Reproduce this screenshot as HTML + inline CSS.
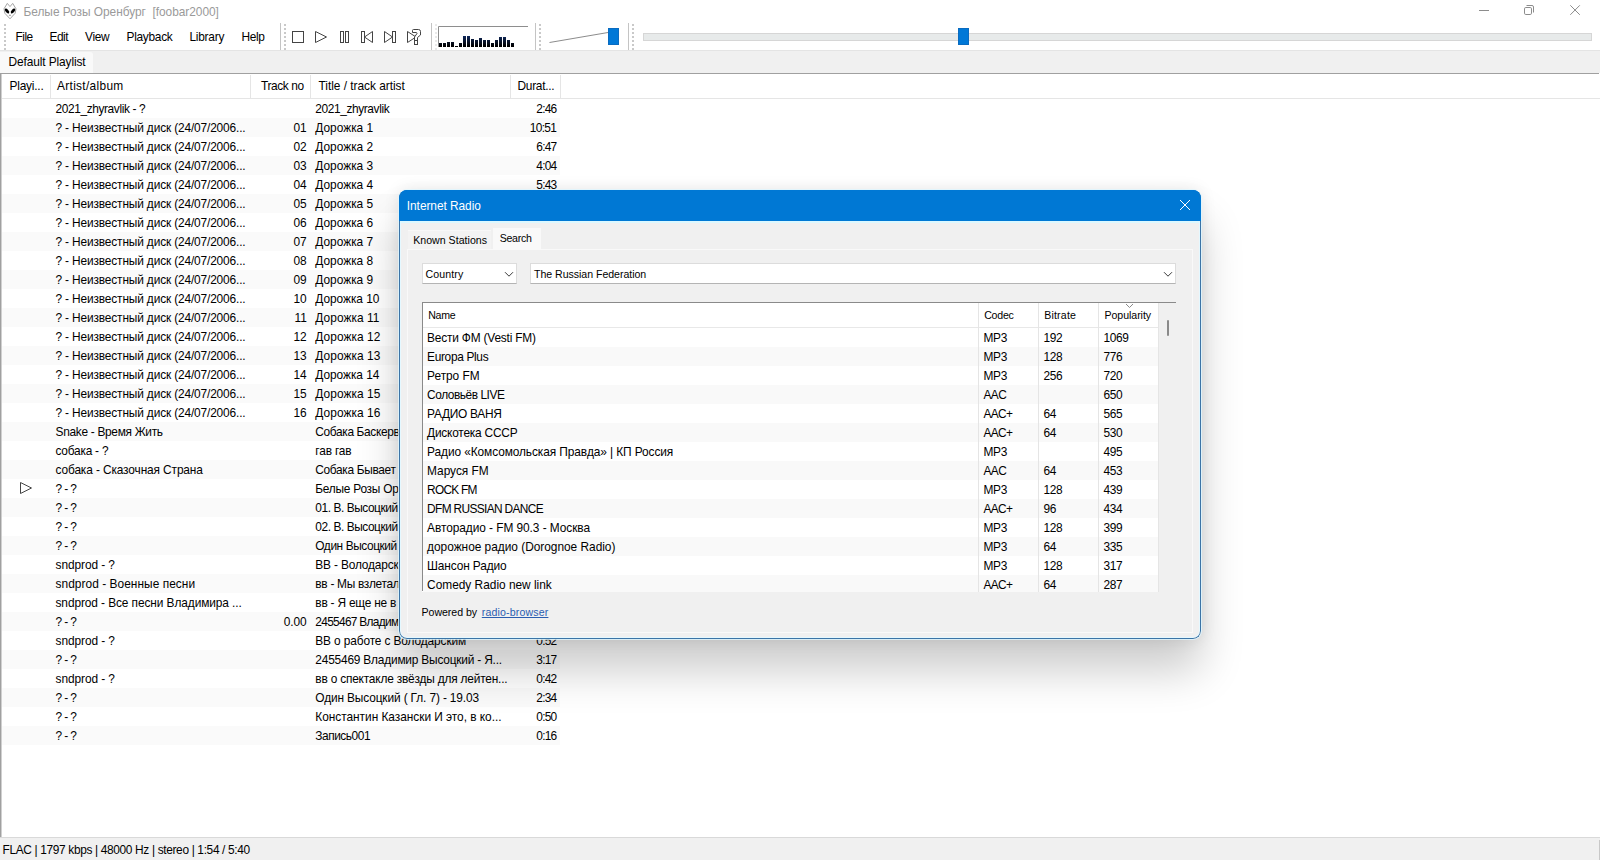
<!DOCTYPE html>
<html lang="ru"><head><meta charset="utf-8"><title>Белые Розы Оренбург [foobar2000]</title>
<style>
html,body{margin:0;padding:0}
body{width:1600px;height:860px;overflow:hidden;background:#fff;position:relative;font-family:'Liberation Sans',sans-serif;font-size:12px;color:#000}
.b{position:absolute;display:block}
.t{position:absolute;white-space:pre;display:block}
#main{position:absolute;left:0;top:0;width:1600px;height:860px;overflow:hidden}
#dlg{position:absolute;left:399px;top:190px;width:802px;height:449px;border-radius:8px;background:#f0f0f0;
 box-shadow:0 0 0 1px rgba(222,246,255,.8),0 32px 44px rgba(0,0,0,.20),0 0 16px rgba(0,0,0,.10)}
#dlgin{position:absolute;left:-399px;top:-190px;width:1600px;height:860px;clip-path:inset(190px 399px 221px 399px round 8px)}
#dtitle{position:absolute;left:399px;top:190px;width:802px;height:31px;background:#0078d4}
#dborder{position:absolute;left:399px;top:190px;width:802px;height:449px;box-sizing:border-box;border:1px solid #3c74a6;border-top-color:#0078d4;border-radius:8px}
#dhl{position:absolute;left:400px;top:221px;width:800px;height:417px;box-sizing:border-box;border:1px solid #e4f8ff;border-top:2px solid #dcf8ff;border-radius:0 0 7px 7px}
#dtb{position:absolute;left:399px;top:190px;width:802px;height:31px;box-sizing:border-box;border:1px solid #0078d4;border-bottom:0;border-radius:8px 8px 0 0}
</style></head>
<body>
<div id="main">
<div class=b style="left:0px;top:50px;width:1600px;height:23px;background:#f0f0f0;"></div>
<div class=b style="left:0px;top:50px;width:1600px;height:1px;background:#e4e4e4;"></div>
<div class=b style="left:0px;top:52px;width:93px;height:21px;background:#f9f9f9;border-radius:0 3px 0 0"></div>
<div class=b style="left:0px;top:73px;width:1599px;height:1px;background:#a0a0a0;"></div>
<div class=b style="left:280px;top:23px;width:1px;height:27px;background:#c4c4c4;"></div>
<div class=b style="left:431px;top:23px;width:1px;height:27px;background:#c4c4c4;"></div>
<div class=b style="left:535px;top:23px;width:1px;height:27px;background:#c4c4c4;"></div>
<div class=b style="left:628px;top:23px;width:1px;height:27px;background:#c4c4c4;"></div>
<div class=b style="left:4px;top:24px;width:2px;height:26px;background:repeating-linear-gradient(to bottom,#c9c9c9 0 2px,#fff 2px 4px)"></div>
<div class=b style="left:284px;top:24px;width:2px;height:26px;background:repeating-linear-gradient(to bottom,#c9c9c9 0 2px,#fff 2px 4px)"></div>
<div class=b style="left:435px;top:24px;width:2px;height:26px;background:repeating-linear-gradient(to bottom,#e9e9e9 0 2px,#fff 2px 4px)"></div>
<div class=b style="left:539px;top:24px;width:2px;height:26px;background:repeating-linear-gradient(to bottom,#c9c9c9 0 2px,#fff 2px 4px)"></div>
<div class=b style="left:632px;top:24px;width:2px;height:26px;background:repeating-linear-gradient(to bottom,#c9c9c9 0 2px,#fff 2px 4px)"></div>
<div class=b style="left:0px;top:98px;width:1600px;height:1px;background:#e5e5e5;"></div>
<div class=b style="left:50px;top:75px;width:1px;height:23px;background:#e5e5e5;"></div>
<div class=b style="left:250px;top:75px;width:1px;height:23px;background:#e5e5e5;"></div>
<div class=b style="left:310px;top:75px;width:1px;height:23px;background:#e5e5e5;"></div>
<div class=b style="left:510px;top:75px;width:1px;height:23px;background:#e5e5e5;"></div>
<div class=b style="left:560px;top:75px;width:1px;height:23px;background:#e5e5e5;"></div>
<div class=b style="left:0px;top:74px;width:1px;height:763px;background:#a0a0a0;"></div>
<div class=b style="left:1px;top:74px;width:1px;height:763px;background:#d0d0d0;"></div>
<div class=b style="left:2px;top:118px;width:558px;height:19px;background:#fafafa;"></div>
<div class=b style="left:2px;top:156px;width:558px;height:19px;background:#fafafa;"></div>
<div class=b style="left:2px;top:194px;width:558px;height:19px;background:#fafafa;"></div>
<div class=b style="left:2px;top:232px;width:558px;height:19px;background:#fafafa;"></div>
<div class=b style="left:2px;top:270px;width:558px;height:19px;background:#fafafa;"></div>
<div class=b style="left:2px;top:308px;width:558px;height:19px;background:#fafafa;"></div>
<div class=b style="left:2px;top:346px;width:558px;height:19px;background:#fafafa;"></div>
<div class=b style="left:2px;top:384px;width:558px;height:19px;background:#fafafa;"></div>
<div class=b style="left:2px;top:422px;width:558px;height:19px;background:#fafafa;"></div>
<div class=b style="left:2px;top:460px;width:558px;height:19px;background:#fafafa;"></div>
<div class=b style="left:2px;top:498px;width:558px;height:19px;background:#fafafa;"></div>
<div class=b style="left:2px;top:536px;width:558px;height:19px;background:#fafafa;"></div>
<div class=b style="left:2px;top:574px;width:558px;height:19px;background:#fafafa;"></div>
<div class=b style="left:2px;top:612px;width:558px;height:19px;background:#fafafa;"></div>
<div class=b style="left:2px;top:650px;width:558px;height:19px;background:#fafafa;"></div>
<div class=b style="left:2px;top:688px;width:558px;height:19px;background:#fafafa;"></div>
<div class=b style="left:2px;top:726px;width:558px;height:19px;background:#fafafa;"></div>
<svg class=b style='left:19px;top:481px' width=14 height=14><path d='M1.5 1.5 L12.5 7 L1.5 12.5 Z' fill='none' stroke='#444' stroke-width='1'/></svg>
<div class=b style="left:0px;top:837px;width:1600px;height:1px;background:#d9d9d9;"></div>
<div class=b style="left:0px;top:838px;width:1600px;height:22px;background:#f0f0f0;"></div>
<div class=b style="left:1599px;top:840px;width:1px;height:20px;background:#c8c8c8;"></div>
<svg class=b style="left:0;top:0" width="1600" height="50" viewBox="0 0 1600 50">
<!-- app icon -->
<path d="M7.3 3.4 L10 6.6 L12.7 3.4 L16 8.8 L15.2 13.2 L10 18.8 L4.8 13.2 L4 8.8 Z" fill="#fff" stroke="#9a9a9a" stroke-width=".9" stroke-linejoin="round"/>
<ellipse cx="7" cy="11" rx="1.5" ry="2.9" transform="rotate(-42 7 11)" fill="#000"/>
<ellipse cx="13" cy="11" rx="1.5" ry="2.9" transform="rotate(42 13 11)" fill="#000"/>
<path d="M10 14.3 L8.8 15.8 L11.2 15.8 Z" fill="#8a8a8a"/>
<!-- window controls -->
<g fill="none" stroke="#8c8c8c" stroke-width="1">
<path d="M1479 10.5 H1489"/>
<rect x="1524.5" y="7.5" width="7" height="7" rx="1.3"/>
<path d="M1526.5 5.5 H1532 Q1533.5 5.5 1533.5 7 V12.5"/>
<path d="M1570.3 5.3 L1579.8 14.8 M1579.8 5.3 L1570.3 14.8"/>
</g>
<!-- playback icons -->
<g fill="none" stroke="#444" stroke-width="1">
<rect x="292.5" y="31.5" width="11" height="11"/>
<path d="M315.5 31.5 L326.5 37 L315.5 42.5 Z"/>
<rect x="340.5" y="31.5" width="3" height="11"/><rect x="345.5" y="31.5" width="3" height="11"/>
<rect x="361.5" y="31.5" width="3" height="11"/><path d="M364.5 37 L372.5 31.5 V42.5 Z"/>
<path d="M384.5 31.5 L392.5 37 L384.5 42.5 Z"/><rect x="392.5" y="31.5" width="3" height="11"/>
<path d="M407.5 31.5 L416 37 L407.5 42.5 Z"/>
<path d="M412.5 32.5 V30.5 Q412.5 29.5 413.5 29.5 H418.5 Q420.5 29.5 420.5 31.5 V35 L417.5 37.5 V40.5 H414.5 V37 L417 33.5 Q417 32.5 416 32.5 Z" fill="#fff"/>
<rect x="414.5" y="40.5" width="3" height="4" fill="#fff"/>
</g>
<!-- spectrum --><defs><linearGradient id='sg' gradientUnits='userSpaceOnUse' x1='0' y1='34' x2='0' y2='46'><stop offset='0' stop-color='#12306e'/><stop offset='1' stop-color='#000'/></linearGradient></defs>
<path d="M438.5 47 V26.5 H528" fill="none" stroke="#8e8e8e" stroke-width="1"/>
<rect x='439' y='43' width='3' height='4' fill='url(#sg)'/><rect x='443' y='43' width='3' height='4' fill='url(#sg)'/><rect x='447' y='42' width='3' height='5' fill='url(#sg)'/><rect x='451' y='42' width='3' height='5' fill='url(#sg)'/><rect x='455' y='46' width='3' height='1' fill='url(#sg)'/><rect x='459' y='43' width='3' height='4' fill='url(#sg)'/><rect x='463' y='36' width='3' height='11' fill='url(#sg)'/><rect x='467' y='36' width='3' height='11' fill='url(#sg)'/><rect x='471' y='39' width='3' height='8' fill='url(#sg)'/><rect x='475' y='40' width='3' height='7' fill='url(#sg)'/><rect x='479' y='38' width='3' height='9' fill='url(#sg)'/><rect x='483' y='40' width='3' height='7' fill='url(#sg)'/><rect x='487' y='40' width='3' height='7' fill='url(#sg)'/><rect x='491' y='43' width='3' height='4' fill='url(#sg)'/><rect x='495' y='40' width='3' height='7' fill='url(#sg)'/><rect x='499' y='37' width='3' height='10' fill='url(#sg)'/><rect x='503' y='37' width='3' height='10' fill='url(#sg)'/><rect x='507' y='40' width='3' height='7' fill='url(#sg)'/><rect x='511' y='43' width='3' height='4' fill='url(#sg)'/>
<!-- volume -->
<path d="M549.5 42.5 L608 32.5" stroke="#8c8c8c" stroke-width="1" fill="none"/>
<rect x="608.5" y="28.5" width="10" height="16" fill="#0078d7" stroke="#0a6bc0" stroke-width="1"/>
<!-- seek -->
<rect x="643.5" y="33.5" width="948" height="7" fill="#e7eaea" stroke="#d6d6d6" stroke-width="1"/>
<rect x="958.5" y="28.5" width="10" height="16" fill="#0078d7" stroke="#0a6bc0" stroke-width="1"/>
</svg>
<span class=t style="left:23.50px;top:7.00px;font-size:11.9px;line-height:11.9px;letter-spacing:-0.031px;color:#9a9a9a;">Белые Розы Оренбург  [foobar2000]</span>
<span class=t style="left:15.50px;top:32.00px;font-size:11.9px;line-height:11.9px;letter-spacing:-0.500px;color:#000;">File</span>
<span class=t style="left:49.50px;top:32.00px;font-size:11.9px;line-height:11.9px;letter-spacing:-0.500px;color:#000;">Edit</span>
<span class=t style="left:85.00px;top:32.00px;font-size:11.9px;line-height:11.9px;letter-spacing:-0.333px;color:#000;">View</span>
<span class=t style="left:126.50px;top:32.00px;font-size:11.9px;line-height:11.9px;letter-spacing:-0.286px;color:#000;">Playback</span>
<span class=t style="left:189.50px;top:32.00px;font-size:11.9px;line-height:11.9px;letter-spacing:-0.250px;color:#000;">Library</span>
<span class=t style="left:241.50px;top:32.00px;font-size:11.9px;line-height:11.9px;letter-spacing:-0.333px;color:#000;">Help</span>
<span class=t style="left:8.50px;top:57.00px;font-size:11.9px;line-height:11.9px;letter-spacing:-0.100px;color:#000;">Default Playlist</span>
<span class=t style="left:9.50px;top:80.50px;font-size:11.9px;line-height:11.9px;letter-spacing:-0.214px;color:#000;">Playi...</span>
<span class=t style="left:57.00px;top:80.50px;font-size:11.9px;line-height:11.9px;letter-spacing:0.318px;color:#000;">Artist/album</span>
<span class=t style="left:261.00px;top:80.50px;font-size:11.9px;line-height:11.9px;letter-spacing:-0.371px;color:#000;">Track no</span>
<span class=t style="left:318.50px;top:80.50px;font-size:11.9px;line-height:11.9px;letter-spacing:-0.026px;color:#000;">Title / track artist</span>
<span class=t style="left:517.50px;top:80.50px;font-size:11.9px;line-height:11.9px;letter-spacing:-0.286px;color:#000;">Durat...</span>
<span class=t style="left:55.50px;top:103.60px;font-size:11.9px;line-height:11.9px;letter-spacing:-0.382px;color:#000;">2021_zhyravlik - ?</span>
<span class=t style="left:315.30px;top:103.60px;font-size:11.9px;line-height:11.9px;letter-spacing:-0.385px;color:#000;">2021_zhyravlik</span>
<span class=t style="left:536.29px;top:103.60px;font-size:11.9px;line-height:11.9px;letter-spacing:-0.763px;color:#000;">2:46</span>
<span class=t style="left:55.50px;top:122.60px;font-size:11.9px;line-height:11.9px;letter-spacing:-0.147px;color:#000;">? - Неизвестный диск (24/07/2006...</span>
<span class=t style="left:293.62px;top:122.60px;font-size:11.9px;line-height:11.9px;letter-spacing:-0.120px;color:#000;">01</span>
<span class=t style="left:315.30px;top:122.60px;font-size:11.9px;line-height:11.9px;letter-spacing:0.000px;color:#000;">Дорожка 1</span>
<span class=t style="left:529.82px;top:122.60px;font-size:11.9px;line-height:11.9px;letter-spacing:-0.705px;color:#000;">10:51</span>
<span class=t style="left:55.50px;top:141.60px;font-size:11.9px;line-height:11.9px;letter-spacing:-0.147px;color:#000;">? - Неизвестный диск (24/07/2006...</span>
<span class=t style="left:293.62px;top:141.60px;font-size:11.9px;line-height:11.9px;letter-spacing:-0.120px;color:#000;">02</span>
<span class=t style="left:315.30px;top:141.60px;font-size:11.9px;line-height:11.9px;letter-spacing:0.000px;color:#000;">Дорожка 2</span>
<span class=t style="left:536.29px;top:141.60px;font-size:11.9px;line-height:11.9px;letter-spacing:-0.763px;color:#000;">6:47</span>
<span class=t style="left:55.50px;top:160.60px;font-size:11.9px;line-height:11.9px;letter-spacing:-0.147px;color:#000;">? - Неизвестный диск (24/07/2006...</span>
<span class=t style="left:293.62px;top:160.60px;font-size:11.9px;line-height:11.9px;letter-spacing:-0.120px;color:#000;">03</span>
<span class=t style="left:315.30px;top:160.60px;font-size:11.9px;line-height:11.9px;letter-spacing:0.000px;color:#000;">Дорожка 3</span>
<span class=t style="left:536.29px;top:160.60px;font-size:11.9px;line-height:11.9px;letter-spacing:-0.763px;color:#000;">4:04</span>
<span class=t style="left:55.50px;top:179.60px;font-size:11.9px;line-height:11.9px;letter-spacing:-0.147px;color:#000;">? - Неизвестный диск (24/07/2006...</span>
<span class=t style="left:293.62px;top:179.60px;font-size:11.9px;line-height:11.9px;letter-spacing:-0.120px;color:#000;">04</span>
<span class=t style="left:315.30px;top:179.60px;font-size:11.9px;line-height:11.9px;letter-spacing:0.000px;color:#000;">Дорожка 4</span>
<span class=t style="left:536.29px;top:179.60px;font-size:11.9px;line-height:11.9px;letter-spacing:-0.763px;color:#000;">5:43</span>
<span class=t style="left:55.50px;top:198.60px;font-size:11.9px;line-height:11.9px;letter-spacing:-0.147px;color:#000;">? - Неизвестный диск (24/07/2006...</span>
<span class=t style="left:293.62px;top:198.60px;font-size:11.9px;line-height:11.9px;letter-spacing:-0.120px;color:#000;">05</span>
<span class=t style="left:315.30px;top:198.60px;font-size:11.9px;line-height:11.9px;letter-spacing:0.000px;color:#000;">Дорожка 5</span>
<span class=t style="left:55.50px;top:217.60px;font-size:11.9px;line-height:11.9px;letter-spacing:-0.147px;color:#000;">? - Неизвестный диск (24/07/2006...</span>
<span class=t style="left:293.62px;top:217.60px;font-size:11.9px;line-height:11.9px;letter-spacing:-0.120px;color:#000;">06</span>
<span class=t style="left:315.30px;top:217.60px;font-size:11.9px;line-height:11.9px;letter-spacing:0.000px;color:#000;">Дорожка 6</span>
<span class=t style="left:55.50px;top:236.60px;font-size:11.9px;line-height:11.9px;letter-spacing:-0.147px;color:#000;">? - Неизвестный диск (24/07/2006...</span>
<span class=t style="left:293.62px;top:236.60px;font-size:11.9px;line-height:11.9px;letter-spacing:-0.120px;color:#000;">07</span>
<span class=t style="left:315.30px;top:236.60px;font-size:11.9px;line-height:11.9px;letter-spacing:0.000px;color:#000;">Дорожка 7</span>
<span class=t style="left:55.50px;top:255.60px;font-size:11.9px;line-height:11.9px;letter-spacing:-0.147px;color:#000;">? - Неизвестный диск (24/07/2006...</span>
<span class=t style="left:293.62px;top:255.60px;font-size:11.9px;line-height:11.9px;letter-spacing:-0.120px;color:#000;">08</span>
<span class=t style="left:315.30px;top:255.60px;font-size:11.9px;line-height:11.9px;letter-spacing:0.000px;color:#000;">Дорожка 8</span>
<span class=t style="left:55.50px;top:274.60px;font-size:11.9px;line-height:11.9px;letter-spacing:-0.147px;color:#000;">? - Неизвестный диск (24/07/2006...</span>
<span class=t style="left:293.62px;top:274.60px;font-size:11.9px;line-height:11.9px;letter-spacing:-0.120px;color:#000;">09</span>
<span class=t style="left:315.30px;top:274.60px;font-size:11.9px;line-height:11.9px;letter-spacing:0.000px;color:#000;">Дорожка 9</span>
<span class=t style="left:55.50px;top:293.60px;font-size:11.9px;line-height:11.9px;letter-spacing:-0.147px;color:#000;">? - Неизвестный диск (24/07/2006...</span>
<span class=t style="left:293.62px;top:293.60px;font-size:11.9px;line-height:11.9px;letter-spacing:-0.120px;color:#000;">10</span>
<span class=t style="left:315.30px;top:293.60px;font-size:11.9px;line-height:11.9px;letter-spacing:-0.044px;color:#000;">Дорожка 10</span>
<span class=t style="left:55.50px;top:312.60px;font-size:11.9px;line-height:11.9px;letter-spacing:-0.147px;color:#000;">? - Неизвестный диск (24/07/2006...</span>
<span class=t style="left:294.62px;top:312.60px;font-size:11.9px;line-height:11.9px;letter-spacing:-0.120px;color:#000;">11</span>
<span class=t style="left:315.30px;top:312.60px;font-size:11.9px;line-height:11.9px;letter-spacing:0.067px;color:#000;">Дорожка 11</span>
<span class=t style="left:55.50px;top:331.60px;font-size:11.9px;line-height:11.9px;letter-spacing:-0.147px;color:#000;">? - Неизвестный диск (24/07/2006...</span>
<span class=t style="left:293.62px;top:331.60px;font-size:11.9px;line-height:11.9px;letter-spacing:-0.120px;color:#000;">12</span>
<span class=t style="left:315.30px;top:331.60px;font-size:11.9px;line-height:11.9px;letter-spacing:0.067px;color:#000;">Дорожка 12</span>
<span class=t style="left:55.50px;top:350.60px;font-size:11.9px;line-height:11.9px;letter-spacing:-0.147px;color:#000;">? - Неизвестный диск (24/07/2006...</span>
<span class=t style="left:293.62px;top:350.60px;font-size:11.9px;line-height:11.9px;letter-spacing:-0.120px;color:#000;">13</span>
<span class=t style="left:315.30px;top:350.60px;font-size:11.9px;line-height:11.9px;letter-spacing:0.067px;color:#000;">Дорожка 13</span>
<span class=t style="left:55.50px;top:369.60px;font-size:11.9px;line-height:11.9px;letter-spacing:-0.147px;color:#000;">? - Неизвестный диск (24/07/2006...</span>
<span class=t style="left:293.62px;top:369.60px;font-size:11.9px;line-height:11.9px;letter-spacing:-0.120px;color:#000;">14</span>
<span class=t style="left:315.30px;top:369.60px;font-size:11.9px;line-height:11.9px;letter-spacing:-0.044px;color:#000;">Дорожка 14</span>
<span class=t style="left:55.50px;top:388.60px;font-size:11.9px;line-height:11.9px;letter-spacing:-0.147px;color:#000;">? - Неизвестный диск (24/07/2006...</span>
<span class=t style="left:293.62px;top:388.60px;font-size:11.9px;line-height:11.9px;letter-spacing:-0.120px;color:#000;">15</span>
<span class=t style="left:315.30px;top:388.60px;font-size:11.9px;line-height:11.9px;letter-spacing:0.067px;color:#000;">Дорожка 15</span>
<span class=t style="left:55.50px;top:407.60px;font-size:11.9px;line-height:11.9px;letter-spacing:-0.147px;color:#000;">? - Неизвестный диск (24/07/2006...</span>
<span class=t style="left:293.62px;top:407.60px;font-size:11.9px;line-height:11.9px;letter-spacing:-0.120px;color:#000;">16</span>
<span class=t style="left:315.30px;top:407.60px;font-size:11.9px;line-height:11.9px;letter-spacing:0.067px;color:#000;">Дорожка 16</span>
<span class=t style="left:55.50px;top:426.60px;font-size:11.9px;line-height:11.9px;letter-spacing:-0.300px;color:#000;">Snake - Время Жить</span>
<span class=t style="left:315.30px;top:426.60px;font-size:11.9px;line-height:11.9px;letter-spacing:-0.346px;color:#000;">Собака Баскервилей</span>
<span class=t style="left:55.50px;top:445.60px;font-size:11.9px;line-height:11.9px;letter-spacing:-0.233px;color:#000;">собака - ?</span>
<span class=t style="left:315.30px;top:445.60px;font-size:11.9px;line-height:11.9px;letter-spacing:-0.180px;color:#000;">гав гав</span>
<span class=t style="left:55.50px;top:464.60px;font-size:11.9px;line-height:11.9px;letter-spacing:-0.117px;color:#000;">собака - Сказочная Страна</span>
<span class=t style="left:315.30px;top:464.60px;font-size:11.9px;line-height:11.9px;letter-spacing:-0.333px;color:#000;">Собака Бывает Кусачей</span>
<span class=t style="left:55.50px;top:483.60px;font-size:11.9px;line-height:11.9px;letter-spacing:-0.600px;color:#000;">? - ?</span>
<span class=t style="left:315.30px;top:483.60px;font-size:11.9px;line-height:11.9px;letter-spacing:-0.250px;color:#000;">Белые Розы Оренбург</span>
<span class=t style="left:55.50px;top:502.60px;font-size:11.9px;line-height:11.9px;letter-spacing:-0.600px;color:#000;">? - ?</span>
<span class=t style="left:315.30px;top:502.60px;font-size:11.9px;line-height:11.9px;letter-spacing:-0.429px;color:#000;">01. В. Высоцкий - Песня</span>
<span class=t style="left:55.50px;top:521.60px;font-size:11.9px;line-height:11.9px;letter-spacing:-0.600px;color:#000;">? - ?</span>
<span class=t style="left:315.30px;top:521.60px;font-size:11.9px;line-height:11.9px;letter-spacing:-0.429px;color:#000;">02. В. Высоцкий - Песня</span>
<span class=t style="left:55.50px;top:540.60px;font-size:11.9px;line-height:11.9px;letter-spacing:-0.600px;color:#000;">? - ?</span>
<span class=t style="left:315.30px;top:540.60px;font-size:11.9px;line-height:11.9px;letter-spacing:-0.417px;color:#000;">Один Высоцкий ( Гл. 1)</span>
<span class=t style="left:55.50px;top:559.60px;font-size:11.9px;line-height:11.9px;letter-spacing:-0.070px;color:#000;">sndprod - ?</span>
<span class=t style="left:315.30px;top:559.60px;font-size:11.9px;line-height:11.9px;letter-spacing:-0.154px;color:#000;">ВВ - Володарский</span>
<span class=t style="left:55.50px;top:578.60px;font-size:11.9px;line-height:11.9px;letter-spacing:0.050px;color:#000;">sndprod - Военные песни</span>
<span class=t style="left:315.30px;top:578.60px;font-size:11.9px;line-height:11.9px;letter-spacing:-0.286px;color:#000;">вв - Мы взлетали как утки</span>
<span class=t style="left:55.50px;top:597.60px;font-size:11.9px;line-height:11.9px;letter-spacing:-0.088px;color:#000;">sndprod - Все песни Владимира ...</span>
<span class=t style="left:315.30px;top:597.60px;font-size:11.9px;line-height:11.9px;letter-spacing:-0.214px;color:#000;">вв - Я еще не в угаре</span>
<span class=t style="left:55.50px;top:616.60px;font-size:11.9px;line-height:11.9px;letter-spacing:-0.600px;color:#000;">? - ?</span>
<span class=t style="left:283.86px;top:616.60px;font-size:11.9px;line-height:11.9px;letter-spacing:-0.120px;color:#000;">0.00</span>
<span class=t style="left:315.30px;top:616.60px;font-size:11.9px;line-height:11.9px;letter-spacing:-0.692px;color:#000;">2455467 Владимир Высоцкий</span>
<span class=t style="left:55.50px;top:635.60px;font-size:11.9px;line-height:11.9px;letter-spacing:-0.070px;color:#000;">sndprod - ?</span>
<span class=t style="left:315.30px;top:635.60px;font-size:11.9px;line-height:11.9px;letter-spacing:-0.121px;color:#000;">ВВ о работе с Володарским</span>
<span class=t style="left:536.29px;top:635.60px;font-size:11.9px;line-height:11.9px;letter-spacing:-0.763px;color:#000;">0:52</span>
<span class=t style="left:55.50px;top:654.60px;font-size:11.9px;line-height:11.9px;letter-spacing:-0.600px;color:#000;">? - ?</span>
<span class=t style="left:315.30px;top:654.60px;font-size:11.9px;line-height:11.9px;letter-spacing:-0.197px;color:#000;">2455469 Владимир Высоцкий - Я...</span>
<span class=t style="left:536.29px;top:654.60px;font-size:11.9px;line-height:11.9px;letter-spacing:-0.763px;color:#000;">3:17</span>
<span class=t style="left:55.50px;top:673.60px;font-size:11.9px;line-height:11.9px;letter-spacing:-0.070px;color:#000;">sndprod - ?</span>
<span class=t style="left:315.30px;top:673.60px;font-size:11.9px;line-height:11.9px;letter-spacing:-0.194px;color:#000;">вв о спектакле звёзды для лейтен...</span>
<span class=t style="left:536.29px;top:673.60px;font-size:11.9px;line-height:11.9px;letter-spacing:-0.763px;color:#000;">0:42</span>
<span class=t style="left:55.50px;top:692.60px;font-size:11.9px;line-height:11.9px;letter-spacing:-0.600px;color:#000;">? - ?</span>
<span class=t style="left:315.30px;top:692.60px;font-size:11.9px;line-height:11.9px;letter-spacing:-0.134px;color:#000;">Один Высоцкий ( Гл. 7) - 19.03</span>
<span class=t style="left:536.29px;top:692.60px;font-size:11.9px;line-height:11.9px;letter-spacing:-0.763px;color:#000;">2:34</span>
<span class=t style="left:55.50px;top:711.60px;font-size:11.9px;line-height:11.9px;letter-spacing:-0.600px;color:#000;">? - ?</span>
<span class=t style="left:315.30px;top:711.60px;font-size:11.9px;line-height:11.9px;letter-spacing:-0.033px;color:#000;">Константин Казански И это, в ко...</span>
<span class=t style="left:536.29px;top:711.60px;font-size:11.9px;line-height:11.9px;letter-spacing:-0.763px;color:#000;">0:50</span>
<span class=t style="left:55.50px;top:730.60px;font-size:11.9px;line-height:11.9px;letter-spacing:-0.600px;color:#000;">? - ?</span>
<span class=t style="left:315.30px;top:730.60px;font-size:11.9px;line-height:11.9px;letter-spacing:-0.450px;color:#000;">Запись001</span>
<span class=t style="left:536.29px;top:730.60px;font-size:11.9px;line-height:11.9px;letter-spacing:-0.763px;color:#000;">0:16</span>
<span class=t style="left:2.50px;top:845.00px;font-size:11.9px;line-height:11.9px;letter-spacing:-0.337px;color:#000;">FLAC | 1797 kbps | 48000 Hz | stereo | 1:54 / 5:40</span>
</div>
<div id="dlg"><div id="dlgin">
<div id="dtitle"></div>
<div class=b style="left:408px;top:230px;width:83px;height:19px;background:#f3f3f3;border-top:1px solid #f8f8f8;box-sizing:border-box"></div>
<div class=b style="left:493px;top:228px;width:48px;height:22px;background:#f9f9f9;"></div>
<div class=b style="left:407px;top:249px;width:786px;height:384px;background:#f0f0f0;box-shadow:inset 0 0 0 1px #f9f9f9"></div>
<div class=b style="left:422px;top:263px;width:95px;height:21px;background:#fff;box-sizing:border-box;border:1px solid #dcdcdc;border-bottom-color:#b4b4b4"></div>
<svg class=b style='left:504px;top:270px' width=10 height=8><path d='M1 2.2 L5 6.2 L9 2.2' fill='none' stroke='#3a3a3a' stroke-width='1'/></svg>
<div class=b style="left:530px;top:263px;width:646px;height:21px;background:#fff;box-sizing:border-box;border:1px solid #dcdcdc;border-bottom-color:#b4b4b4"></div>
<svg class=b style='left:1163px;top:270px' width=10 height=8><path d='M1 2.2 L5 6.2 L9 2.2' fill='none' stroke='#3a3a3a' stroke-width='1'/></svg>
<div class=b style="left:422px;top:302px;width:754px;height:290px;background:#fff;"></div>
<div class=b style="left:422px;top:302px;width:754px;height:1px;background:#8a8a8a;"></div>
<div class=b style="left:422px;top:302px;width:1px;height:289px;background:#8a8a8a;"></div>
<div class=b style="left:423px;top:327px;width:735px;height:1px;background:#e8e8e8;"></div>
<div class=b style="left:978px;top:303px;width:1px;height:289px;background:#e5e5e5;"></div>
<div class=b style="left:1038px;top:303px;width:1px;height:289px;background:#e5e5e5;"></div>
<div class=b style="left:1098px;top:303px;width:1px;height:289px;background:#e5e5e5;"></div>
<div class=b style="left:1158px;top:303px;width:1px;height:289px;background:#e5e5e5;"></div>
<div class=b style="left:1159px;top:303px;width:17px;height:289px;background:#f0f0f0;"></div>
<div class=b style="left:1167px;top:320px;width:2px;height:16px;background:#8a8a8a;border-radius:1px"></div>
<svg class=b style='left:1125px;top:303px' width=10 height=6><path d='M1 1 L4.5 4.5 L8 1' fill='none' stroke='#8a8a8a' stroke-width='1'/></svg>
<div class=b style="left:423px;top:347px;width:735px;height:19px;background:#f9f9f9;"></div>
<div class=b style="left:978px;top:347px;width:1px;height:19px;background:#e5e5e5;"></div>
<div class=b style="left:1038px;top:347px;width:1px;height:19px;background:#e5e5e5;"></div>
<div class=b style="left:1098px;top:347px;width:1px;height:19px;background:#e5e5e5;"></div>
<div class=b style="left:423px;top:385px;width:735px;height:19px;background:#f9f9f9;"></div>
<div class=b style="left:978px;top:385px;width:1px;height:19px;background:#e5e5e5;"></div>
<div class=b style="left:1038px;top:385px;width:1px;height:19px;background:#e5e5e5;"></div>
<div class=b style="left:1098px;top:385px;width:1px;height:19px;background:#e5e5e5;"></div>
<div class=b style="left:423px;top:423px;width:735px;height:19px;background:#f9f9f9;"></div>
<div class=b style="left:978px;top:423px;width:1px;height:19px;background:#e5e5e5;"></div>
<div class=b style="left:1038px;top:423px;width:1px;height:19px;background:#e5e5e5;"></div>
<div class=b style="left:1098px;top:423px;width:1px;height:19px;background:#e5e5e5;"></div>
<div class=b style="left:423px;top:461px;width:735px;height:19px;background:#f9f9f9;"></div>
<div class=b style="left:978px;top:461px;width:1px;height:19px;background:#e5e5e5;"></div>
<div class=b style="left:1038px;top:461px;width:1px;height:19px;background:#e5e5e5;"></div>
<div class=b style="left:1098px;top:461px;width:1px;height:19px;background:#e5e5e5;"></div>
<div class=b style="left:423px;top:499px;width:735px;height:19px;background:#f9f9f9;"></div>
<div class=b style="left:978px;top:499px;width:1px;height:19px;background:#e5e5e5;"></div>
<div class=b style="left:1038px;top:499px;width:1px;height:19px;background:#e5e5e5;"></div>
<div class=b style="left:1098px;top:499px;width:1px;height:19px;background:#e5e5e5;"></div>
<div class=b style="left:423px;top:537px;width:735px;height:19px;background:#f9f9f9;"></div>
<div class=b style="left:978px;top:537px;width:1px;height:19px;background:#e5e5e5;"></div>
<div class=b style="left:1038px;top:537px;width:1px;height:19px;background:#e5e5e5;"></div>
<div class=b style="left:1098px;top:537px;width:1px;height:19px;background:#e5e5e5;"></div>
<div class=b style="left:423px;top:575px;width:735px;height:17px;background:#f9f9f9;"></div>
<div class=b style="left:978px;top:575px;width:1px;height:17px;background:#e5e5e5;"></div>
<div class=b style="left:1038px;top:575px;width:1px;height:17px;background:#e5e5e5;"></div>
<div class=b style="left:1098px;top:575px;width:1px;height:17px;background:#e5e5e5;"></div>
<svg class=b style="left:1179px;top:199px" width="12" height="12"><path d="M1 1 L11 11 M11 1 L1 11" stroke="#fff" stroke-width="1" fill="none"/></svg>
<span class=t style="left:406.80px;top:201.00px;font-size:11.9px;line-height:11.9px;letter-spacing:-0.046px;color:#fff;">Internet Radio</span>
<span class=t style="left:413.20px;top:235.00px;font-size:10.6px;line-height:10.6px;letter-spacing:0.015px;color:#000;">Known Stations</span>
<span class=t style="left:499.70px;top:233.00px;font-size:10.6px;line-height:10.6px;letter-spacing:-0.280px;color:#000;">Search</span>
<span class=t style="left:425.40px;top:269.00px;font-size:10.6px;line-height:10.6px;letter-spacing:0.133px;color:#000;">Country</span>
<span class=t style="left:534.00px;top:269.00px;font-size:10.6px;line-height:10.6px;letter-spacing:-0.038px;color:#000;">The Russian Federation</span>
<span class=t style="left:428.20px;top:310.00px;font-size:10.6px;line-height:10.6px;letter-spacing:-0.300px;color:#000;">Name</span>
<span class=t style="left:984.20px;top:310.00px;font-size:10.6px;line-height:10.6px;letter-spacing:-0.225px;color:#000;">Codec</span>
<span class=t style="left:1044.20px;top:310.00px;font-size:10.6px;line-height:10.6px;letter-spacing:0.183px;color:#000;">Bitrate</span>
<span class=t style="left:1104.50px;top:310.00px;font-size:10.6px;line-height:10.6px;letter-spacing:-0.056px;color:#000;">Popularity</span>
<span class=t style="left:427.10px;top:332.60px;font-size:11.9px;line-height:11.9px;letter-spacing:-0.189px;color:#000;">Вести ФМ (Vesti FM)</span>
<span class=t style="left:983.40px;top:332.60px;font-size:11.9px;line-height:11.9px;letter-spacing:-0.300px;color:#000;">MP3</span>
<span class=t style="left:1043.40px;top:332.60px;font-size:11.9px;line-height:11.9px;letter-spacing:-0.350px;color:#000;">192</span>
<span class=t style="left:1103.40px;top:332.60px;font-size:11.9px;line-height:11.9px;letter-spacing:-0.350px;color:#000;">1069</span>
<span class=t style="left:427.10px;top:351.60px;font-size:11.9px;line-height:11.9px;letter-spacing:-0.330px;color:#000;">Europa Plus</span>
<span class=t style="left:983.40px;top:351.60px;font-size:11.9px;line-height:11.9px;letter-spacing:-0.300px;color:#000;">MP3</span>
<span class=t style="left:1043.40px;top:351.60px;font-size:11.9px;line-height:11.9px;letter-spacing:-0.350px;color:#000;">128</span>
<span class=t style="left:1103.40px;top:351.60px;font-size:11.9px;line-height:11.9px;letter-spacing:-0.350px;color:#000;">776</span>
<span class=t style="left:427.10px;top:370.60px;font-size:11.9px;line-height:11.9px;letter-spacing:-0.043px;color:#000;">Ретро FM</span>
<span class=t style="left:983.40px;top:370.60px;font-size:11.9px;line-height:11.9px;letter-spacing:-0.300px;color:#000;">MP3</span>
<span class=t style="left:1043.40px;top:370.60px;font-size:11.9px;line-height:11.9px;letter-spacing:-0.350px;color:#000;">256</span>
<span class=t style="left:1103.40px;top:370.60px;font-size:11.9px;line-height:11.9px;letter-spacing:-0.350px;color:#000;">720</span>
<span class=t style="left:427.10px;top:389.60px;font-size:11.9px;line-height:11.9px;letter-spacing:-0.450px;color:#000;">Соловьёв LIVE</span>
<span class=t style="left:983.40px;top:389.60px;font-size:11.9px;line-height:11.9px;letter-spacing:-0.450px;color:#000;">AAC</span>
<span class=t style="left:1103.40px;top:389.60px;font-size:11.9px;line-height:11.9px;letter-spacing:-0.350px;color:#000;">650</span>
<span class=t style="left:427.10px;top:408.60px;font-size:11.9px;line-height:11.9px;letter-spacing:-0.278px;color:#000;">РАДИО ВАНЯ</span>
<span class=t style="left:983.40px;top:408.60px;font-size:11.9px;line-height:11.9px;letter-spacing:-0.633px;color:#000;">AAC+</span>
<span class=t style="left:1043.40px;top:408.60px;font-size:11.9px;line-height:11.9px;letter-spacing:-0.350px;color:#000;">64</span>
<span class=t style="left:1103.40px;top:408.60px;font-size:11.9px;line-height:11.9px;letter-spacing:-0.350px;color:#000;">565</span>
<span class=t style="left:427.10px;top:427.60px;font-size:11.9px;line-height:11.9px;letter-spacing:-0.215px;color:#000;">Дискотека СССР</span>
<span class=t style="left:983.40px;top:427.60px;font-size:11.9px;line-height:11.9px;letter-spacing:-0.633px;color:#000;">AAC+</span>
<span class=t style="left:1043.40px;top:427.60px;font-size:11.9px;line-height:11.9px;letter-spacing:-0.350px;color:#000;">64</span>
<span class=t style="left:1103.40px;top:427.60px;font-size:11.9px;line-height:11.9px;letter-spacing:-0.350px;color:#000;">530</span>
<span class=t style="left:427.10px;top:446.60px;font-size:11.9px;line-height:11.9px;letter-spacing:-0.090px;color:#000;">Радио «Комсомольская Правда» | КП Россия</span>
<span class=t style="left:983.40px;top:446.60px;font-size:11.9px;line-height:11.9px;letter-spacing:-0.300px;color:#000;">MP3</span>
<span class=t style="left:1103.40px;top:446.60px;font-size:11.9px;line-height:11.9px;letter-spacing:-0.350px;color:#000;">495</span>
<span class=t style="left:427.10px;top:465.60px;font-size:11.9px;line-height:11.9px;letter-spacing:-0.037px;color:#000;">Маруся FM</span>
<span class=t style="left:983.40px;top:465.60px;font-size:11.9px;line-height:11.9px;letter-spacing:-0.450px;color:#000;">AAC</span>
<span class=t style="left:1043.40px;top:465.60px;font-size:11.9px;line-height:11.9px;letter-spacing:-0.350px;color:#000;">64</span>
<span class=t style="left:1103.40px;top:465.60px;font-size:11.9px;line-height:11.9px;letter-spacing:-0.350px;color:#000;">453</span>
<span class=t style="left:427.10px;top:484.60px;font-size:11.9px;line-height:11.9px;letter-spacing:-0.750px;color:#000;">ROCK FM</span>
<span class=t style="left:983.40px;top:484.60px;font-size:11.9px;line-height:11.9px;letter-spacing:-0.300px;color:#000;">MP3</span>
<span class=t style="left:1043.40px;top:484.60px;font-size:11.9px;line-height:11.9px;letter-spacing:-0.350px;color:#000;">128</span>
<span class=t style="left:1103.40px;top:484.60px;font-size:11.9px;line-height:11.9px;letter-spacing:-0.350px;color:#000;">439</span>
<span class=t style="left:427.10px;top:503.60px;font-size:11.9px;line-height:11.9px;letter-spacing:-0.644px;color:#000;">DFM RUSSIAN DANCE</span>
<span class=t style="left:983.40px;top:503.60px;font-size:11.9px;line-height:11.9px;letter-spacing:-0.633px;color:#000;">AAC+</span>
<span class=t style="left:1043.40px;top:503.60px;font-size:11.9px;line-height:11.9px;letter-spacing:-0.350px;color:#000;">96</span>
<span class=t style="left:1103.40px;top:503.60px;font-size:11.9px;line-height:11.9px;letter-spacing:-0.350px;color:#000;">434</span>
<span class=t style="left:427.10px;top:522.60px;font-size:11.9px;line-height:11.9px;letter-spacing:-0.063px;color:#000;">Авторадио - FM 90.3 - Москва</span>
<span class=t style="left:983.40px;top:522.60px;font-size:11.9px;line-height:11.9px;letter-spacing:-0.300px;color:#000;">MP3</span>
<span class=t style="left:1043.40px;top:522.60px;font-size:11.9px;line-height:11.9px;letter-spacing:-0.350px;color:#000;">128</span>
<span class=t style="left:1103.40px;top:522.60px;font-size:11.9px;line-height:11.9px;letter-spacing:-0.350px;color:#000;">399</span>
<span class=t style="left:427.10px;top:541.60px;font-size:11.9px;line-height:11.9px;letter-spacing:-0.020px;color:#000;">дорожное радио (Dorognoe Radio)</span>
<span class=t style="left:983.40px;top:541.60px;font-size:11.9px;line-height:11.9px;letter-spacing:-0.300px;color:#000;">MP3</span>
<span class=t style="left:1043.40px;top:541.60px;font-size:11.9px;line-height:11.9px;letter-spacing:-0.350px;color:#000;">64</span>
<span class=t style="left:1103.40px;top:541.60px;font-size:11.9px;line-height:11.9px;letter-spacing:-0.350px;color:#000;">335</span>
<span class=t style="left:427.10px;top:560.60px;font-size:11.9px;line-height:11.9px;letter-spacing:-0.127px;color:#000;">Шансон Радио</span>
<span class=t style="left:983.40px;top:560.60px;font-size:11.9px;line-height:11.9px;letter-spacing:-0.300px;color:#000;">MP3</span>
<span class=t style="left:1043.40px;top:560.60px;font-size:11.9px;line-height:11.9px;letter-spacing:-0.350px;color:#000;">128</span>
<span class=t style="left:1103.40px;top:560.60px;font-size:11.9px;line-height:11.9px;letter-spacing:-0.350px;color:#000;">317</span>
<span class=t style="left:427.10px;top:579.60px;font-size:11.9px;line-height:11.9px;letter-spacing:-0.010px;color:#000;">Comedy Radio new link</span>
<span class=t style="left:983.40px;top:579.60px;font-size:11.9px;line-height:11.9px;letter-spacing:-0.633px;color:#000;">AAC+</span>
<span class=t style="left:1043.40px;top:579.60px;font-size:11.9px;line-height:11.9px;letter-spacing:-0.350px;color:#000;">64</span>
<span class=t style="left:1103.40px;top:579.60px;font-size:11.9px;line-height:11.9px;letter-spacing:-0.350px;color:#000;">287</span>
<span class=t style="left:421.50px;top:607.00px;font-size:10.6px;line-height:10.6px;letter-spacing:-0.033px;color:#000;">Powered by</span>
<span class=t style="left:481.80px;top:607.00px;font-size:10.6px;line-height:10.6px;letter-spacing:0.142px;color:#2a5db0;text-decoration:underline">radio-browser</span>
<div id="dhl"></div><div id="dborder"></div><div id="dtb"></div>
</div></div>
</body></html>
